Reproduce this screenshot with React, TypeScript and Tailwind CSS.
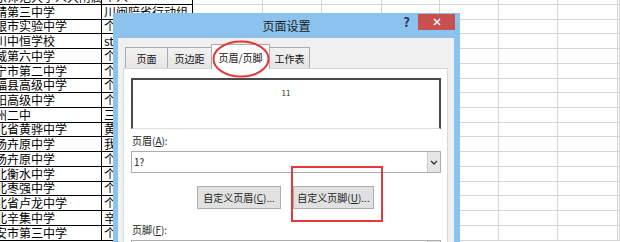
import React from 'react';

// rows of the sheet behind the dialog (col A is cut at the left edge of the shot)
const rows = [
  { a: '东师范大学人大附属中学', b: '个人' },
  { a: '靖第三中学', b: '川闽陪省行动组' },
  { a: '银市实验中学', b: '个人' },
  { a: '川中恒学校', b: 'st' },
  { a: '威第六中学', b: '个人' },
  { a: '宁市第二中学', b: '个人' },
  { a: '福县高级中学', b: '个人' },
  { a: '阳高级中学', b: '个人' },
  { a: '州二中', b: '三' },
  { a: '北省黄骅中学', b: '黄' },
  { a: '汤卉原中学', b: '我' },
  { a: '汤卉原中学', b: '个人' },
  { a: '北衡水中学', b: '个人' },
  { a: '北枣强中学', b: '个人' },
  { a: '北省卢龙中学', b: '个人' },
  { a: '北辛集中学', b: '辛' },
  { a: '安市第三中学', b: '个人' },
];

const gridCols = ['w-[70px]', 'w-[59px]', 'w-[60px]', 'w-[58px]', 'w-[59px]', 'w-[59px]', 'w-[60px]', 'flex-1'];

const tabs = [
  { label: '页面', w: 'w-[43px]' },
  { label: '页边距', w: 'w-[45px]' },
  { label: '页眉/页脚', w: 'w-[59px]', active: true },
  { label: '工作表', w: 'w-[41px]' },
];

const Chevron = () => (
  <svg width="8" height="5" viewBox="0 0 8 5">
    <path d="M1 1l3 3 3-3" fill="none" stroke="#333" strokeWidth="1.3" />
  </svg>
);

const Combo = ({ value }: { value?: string }) => (
  <div className="flex h-[22px] border border-[#abadb3] bg-white">
    <div className="flex-1 pl-[2px] text-[10px] leading-[20px] text-[#222]">{value}</div>
    <div className="flex w-[13px] items-center justify-center border-l border-[#c8c8c8] bg-[#e6e6e6]">
      <Chevron />
    </div>
  </div>
);

const Button = ({ w, text, hot }: { w: string; text: string; hot: string }) => (
  <div className={`${w} flex h-[23px] items-center justify-center border border-[#adadad] bg-[#e1e1e1] text-[10px] whitespace-nowrap text-[#222]`}>
    {text}(<span className="underline">{hot}</span>)...
  </div>
);

const App = () => {
  return (
    <div className="relative h-[242px] w-[620px] overflow-hidden bg-white font-['Noto_Sans_CJK_SC',sans-serif]">
      {/* sheet */}
      <div className="flex flex-col">
        {rows.map((r, i) => (
          <div key={i} className={`flex ${i === 0 ? 'h-[5px]' : 'h-[14.73px]'}`}>
            <div className="flex w-[102px] shrink-0 items-end overflow-hidden border-r border-b border-black">
              <span className="-ml-[5px] whitespace-nowrap text-[12px] leading-[14px] text-black">{r.a}</span>
            </div>
            <div className="flex w-[91px] shrink-0 items-end overflow-hidden border-r border-b border-black">
              <span className="pl-[2px] whitespace-nowrap text-[12px] leading-[14px] text-black">{r.b}</span>
            </div>
            {gridCols.map((c, j) => (
              <div key={j} className={`${c} shrink-0 border-r border-b border-[#d6d6d6]`} />
            ))}
          </div>
        ))}
      </div>

      {/* page setup dialog */}
      <div className="absolute top-[13px] left-[113px] flex h-[232px] w-[347px] flex-col bg-[#8cc3ee]">
        <div className="relative flex h-[25px] shrink-0 items-center justify-center">
          <span className="text-[12px] leading-[16px] text-[#1b1b1b]">页面设置</span>
          <div className="absolute top-[1px] right-[5px] flex items-start">
            <span className="mr-[8px] text-[13px] leading-[16px] font-bold text-[#1f3a5a]">?</span>
            <div className="flex h-[16px] w-[37px] items-center justify-center bg-[#c75050]">
              <svg width="8" height="8" viewBox="0 0 8 8">
                <path d="M1 1l6 6M7 1l-6 6" stroke="#fff" strokeWidth="1.6" />
              </svg>
            </div>
          </div>
        </div>

        <div className="ml-[5px] mr-[6px] flex-1 bg-[#f0f0f0] pt-[6px] pr-[6px] pl-[5px]">
          {/* tabs */}
          <div className="ml-[2px] flex h-[24px] items-end">
            {tabs.map((t, i) =>
              t.active ? (
                <div
                  key={i}
                  className={`${t.w} relative z-10 -mb-px -ml-px flex h-[25px] items-center justify-center border border-b-0 border-[#acacac] bg-white text-[10px] whitespace-nowrap text-[#111]`}
                >
                  {t.label}
                </div>
              ) : (
                <div
                  key={i}
                  className={`${t.w} ${i > 0 ? '-ml-px' : ''} flex h-[21px] items-center justify-center border border-b-0 border-[#acacac] bg-gradient-to-b from-[#f2f2f2] to-[#e5e5e5] text-[10px] whitespace-nowrap text-[#111]`}
                >
                  {t.label}
                </div>
              )
            )}
          </div>

          {/* tab panel */}
          <div className="h-[200px] border border-[#d9d9d9] bg-white pt-[9px] pl-[7px]">
            <div className="w-[310px]">
              <div className="flex h-[51px] justify-center border-2 border-b border-[#4a4a4a] border-b-[#e0e0e0] pt-[8px]">
                <span className="text-[8px] leading-[10px] text-[#333]">11</span>
              </div>
              <div className="mt-[4px] pl-[1px] text-[10px] leading-[16px] text-[#222]">
                页眉(<span className="underline">A</span>):
              </div>
              <div className="mt-[2px]">
                <Combo value="1?" />
              </div>
              <div className="mt-[13px] flex gap-[12px] pl-[66px]">
                <Button w="w-[84px]" text="自定义页眉" hot="C" />
                <Button w="w-[81px]" text="自定义页脚" hot="U" />
              </div>
              <div className="mt-[13px] pl-[1px] text-[10px] leading-[16px] text-[#222]">
                页脚(<span className="underline">F</span>):
              </div>
              <div className="mt-[2px]">
                <Combo />
              </div>
            </div>
          </div>
        </div>
      </div>

      {/* red annotations */}
      <svg className="absolute top-[40px] left-[212px] z-20" width="58" height="38" viewBox="0 0 58 38">
        <ellipse cx="29" cy="19" rx="27.5" ry="17.5" fill="none" stroke="#e5383b" strokeWidth="2" />
      </svg>
      <div className="absolute top-[166px] left-[291px] z-20 h-[56px] w-[92px] border-2 border-[#e5383b]" />
    </div>
  );
};

export default App;
